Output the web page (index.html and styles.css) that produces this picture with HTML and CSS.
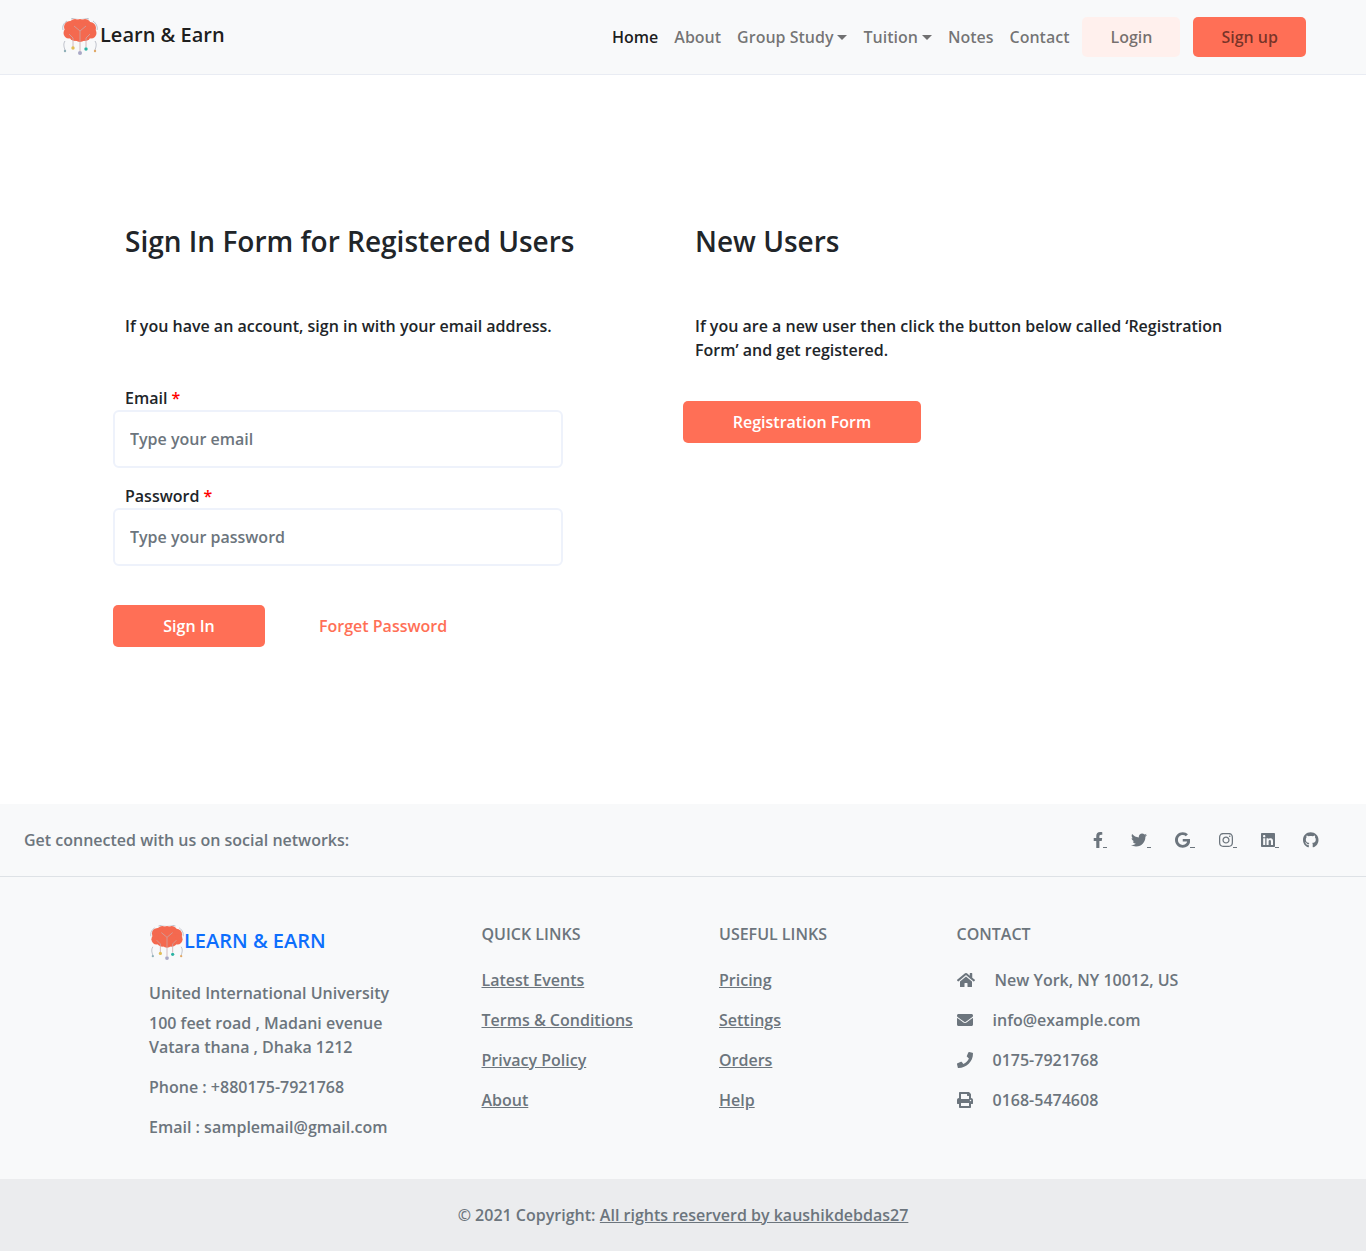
FILE: index.html
```html
<!DOCTYPE html>
<html lang="en">
<head>
<meta charset="utf-8">
<title>Learn &amp; Earn</title>
<link rel="stylesheet" href="styles.css">
</head>
<body>
<svg class="defs" width="0" height="0" aria-hidden="true">
  <symbol id="brain" viewBox="0 0 36 38">
    <g fill="none" stroke="#a4a8b4" stroke-width=".7">
      <path d="M1 12c-1-4 1-7 4-9M9 1c5-2 12-2 18 0M31 3c3 2 5 6 4 9"/>
      <path d="M3 23c-2 3-1 6 0 9M33 23c2 3 1 6 0 9"/>
    </g>
    <g fill="#f4694f">
      <circle cx="8" cy="9" r="6"/>
      <circle cx="13" cy="7" r="6"/>
      <circle cx="18" cy="7" r="6"/>
      <circle cx="23" cy="7" r="6"/>
      <circle cx="28" cy="10" r="6"/>
      <circle cx="7" cy="15" r="5.5"/>
      <circle cx="13" cy="17" r="6"/>
      <circle cx="18" cy="18" r="6"/>
      <circle cx="23" cy="17" r="6"/>
      <circle cx="29" cy="15" r="5.5"/>
      <circle cx="18" cy="13" r="9"/>
    </g>
    <g fill="none" stroke="#c9a8a8" stroke-width=".8">
      <path d="M11 29v-9l-4-4M18 33V13M24 29v-9l4-4M12 8l6 5 6-5"/>
    </g>
    <circle cx="3" cy="33" r="1.2" fill="#8fb0b8"/>
    <circle cx="11" cy="30" r="1.7" fill="#e2be55"/>
    <circle cx="18" cy="35" r="2" fill="#a9a9c6"/>
    <circle cx="24" cy="31" r="1.7" fill="#2bb3a3"/>
    <circle cx="33" cy="33" r="1.2" fill="#e0a866"/>
  </symbol>
</svg>

<header class="navbar">
  <a class="brand" href="#"><svg class="brand-logo"><use href="#brain"/></svg><span>Learn &amp; Earn</span></a>
  <nav class="nav">
    <a class="nav-link active" href="#">Home</a>
    <a class="nav-link" href="#">About</a>
    <a class="nav-link" href="#">Group Study<i class="caret"></i></a>
    <a class="nav-link" href="#">Tuition<i class="caret"></i></a>
    <a class="nav-link" href="#">Notes</a>
    <a class="nav-link" href="#">Contact</a>
    <a class="nav-btn nav-login" href="#">Login</a>
    <a class="nav-btn nav-signup" href="#">Sign up</a>
  </nav>
</header>

<main class="main">
  <section class="col">
    <h2 class="title">Sign In Form for Registered Users</h2>
    <p class="lead">If you have an account, sign in with your email address.</p>
    <form class="form">
      <label class="label">Email <span class="req">*</span></label>
      <input class="input" type="email" placeholder="Type your email">
      <label class="label label-next">Password <span class="req">*</span></label>
      <input class="input" type="password" placeholder="Type your password">
      <div class="actions">
        <a class="btn btn-signin" href="#">Sign In</a>
        <a class="forget" href="#">Forget Password</a>
      </div>
    </form>
  </section>
  <section class="col">
    <h2 class="title">New Users</h2>
    <p class="lead">If you are a new user then click the button below called ‘Registration Form’ and get registered.</p>
    <a class="btn btn-reg" href="#">Registration Form</a>
  </section>
</main>

<section class="social">
  <span>Get connected with us on social networks:</span>
  <div class="social-icons">
    <a href="#" class="s-link"><svg class="s-f" viewBox="0 0 320 512"><path d="M279.14 288l14.22-92.66h-88.91v-60.13c0-25.35 12.42-50.06 52.24-50.06h40.42V6.26S260.43 0 225.36 0c-73.22 0-121.08 44.38-121.08 124.72v70.62H22.89V288h81.39v224h100.17V288z"/></svg><u></u></a>
    <a href="#" class="s-link"><svg class="s-t" viewBox="0 0 512 512"><path d="M459.37 151.716c.325 4.548.325 9.097.325 13.645 0 138.72-105.583 298.558-298.558 298.558-59.452 0-114.68-17.219-161.137-47.106 8.447.974 16.568 1.299 25.34 1.299 49.055 0 94.213-16.568 130.274-44.832-46.132-.975-84.792-31.188-98.112-72.772 6.498.974 12.995 1.624 19.818 1.624 9.421 0 18.843-1.3 27.614-3.573-48.081-9.747-84.143-51.98-84.143-102.985v-1.299c13.969 7.797 30.214 12.67 47.431 13.319-28.264-18.843-46.781-51.005-46.781-87.391 0-19.492 5.197-37.36 14.294-52.954 51.655 63.675 129.3 105.258 216.365 109.807-1.624-7.797-2.599-15.918-2.599-24.04 0-57.828 46.782-104.934 104.934-104.934 30.213 0 57.502 12.67 76.67 33.137 23.715-4.548 46.456-13.32 66.599-25.34-7.798 24.366-24.366 44.833-46.132 57.827 21.117-2.273 41.584-8.122 60.426-16.243-14.292 20.791-32.161 39.308-52.628 54.253z"/></svg><u></u></a>
    <a href="#" class="s-link"><svg class="s-g" viewBox="0 0 488 512"><path d="M488 261.8C488 403.3 391.1 504 248 504 110.8 504 0 393.2 0 256S110.8 8 248 8c66.8 0 123 24.5 166.3 64.9l-67.5 64.9C258.5 52.6 94.3 116.6 94.3 256c0 86.5 69.1 156.6 153.7 156.6 98.2 0 135-70.4 140.8-106.9H248v-85.3h236.1c2.3 12.7 3.9 24.9 3.9 41.4z"/></svg><u></u></a>
    <a href="#" class="s-link"><svg class="s-i" viewBox="0 0 448 512"><path d="M224.1 141c-63.6 0-114.9 51.3-114.9 114.9s51.3 114.9 114.9 114.9S339 319.5 339 255.9 287.7 141 224.1 141zm0 189.6c-41.1 0-74.7-33.5-74.7-74.7s33.5-74.7 74.7-74.7 74.7 33.5 74.7 74.7-33.6 74.7-74.7 74.7zm146.4-194.3c0 14.9-12 26.8-26.8 26.8-14.9 0-26.8-12-26.8-26.8s12-26.8 26.8-26.8 26.8 12 26.8 26.8zm76.1 27.2c-1.7-35.9-9.9-67.7-36.2-93.9-26.2-26.2-58-34.4-93.9-36.2-37-2.1-147.9-2.1-184.9 0-35.8 1.7-67.6 9.9-93.9 36.1s-34.4 58-36.2 93.9c-2.1 37-2.1 147.9 0 184.9 1.7 35.9 9.9 67.7 36.2 93.9s58 34.4 93.9 36.2c37 2.1 147.9 2.1 184.9 0 35.9-1.7 67.7-9.9 93.9-36.2 26.2-26.2 34.4-58 36.2-93.9 2.1-37 2.1-147.8 0-184.8zM398.8 388c-7.8 19.6-22.9 34.7-42.6 42.6-29.5 11.7-99.5 9-132.1 9s-102.7 2.6-132.1-9c-19.6-7.8-34.7-22.9-42.6-42.6-11.7-29.5-9-99.5-9-132.1s-2.6-102.7 9-132.1c7.8-19.6 22.9-34.7 42.6-42.6 29.5-11.7 99.5-9 132.1-9s102.7-2.6 132.1 9c19.6 7.8 34.7 22.9 42.6 42.6 11.7 29.5 9 99.5 9 132.1s2.7 102.7-9 132.1z"/></svg><u></u></a>
    <a href="#" class="s-link"><svg class="s-i" viewBox="0 0 448 512"><path d="M416 32H31.9C14.3 32 0 46.5 0 64.3v383.4C0 465.5 14.3 480 31.9 480H416c17.6 0 32-14.5 32-32.3V64.3c0-17.8-14.4-32.3-32-32.3zM135.4 416H69V202.2h66.5V416zm-33.2-243c-21.3 0-38.5-17.3-38.5-38.5S80.9 96 102.2 96c21.2 0 38.5 17.3 38.5 38.5 0 21.3-17.2 38.5-38.5 38.5zm282.1 243h-66.4V312c0-24.8-.5-56.7-34.5-56.7-34.6 0-39.9 27-39.9 54.9V416h-66.4V202.2h63.7v29.2h.9c8.9-16.8 30.6-34.5 62.9-34.5 67.2 0 79.7 44.3 79.7 101.9V416z"/></svg><u></u></a>
    <a href="#" class="s-link"><svg class="s-h" viewBox="0 0 496 512"><path d="M165.9 397.4c0 2-2.3 3.6-5.2 3.6-3.3 0-5.6-1.6-5.6-3.6 0-2 2.3-3.6 5.2-3.6 3-.3 5.6 1.3 5.6 3.6zm-31.1-4.5c-.7 2 1.3 4.3 4.3 4.9 2.6 1 5.6 0 6.2-2s-1.3-4.3-4.3-5.2c-2.6-.7-5.5.3-6.2 2.3zm44.2-1.7c-2.9.7-4.9 2.6-4.6 4.9.3 2 2.9 3.3 5.9 2.6 2.9-.7 4.9-2.6 4.6-4.6-.3-1.9-3-3.2-5.9-2.9zM244.8 8C106.1 8 0 113.3 0 252c0 110.9 69.8 205.8 169.5 239.2 12.8 2.3 17.3-5.6 17.3-12.1 0-6.2-.3-40.4-.3-61.4 0 0-70 15-84.7-29.8 0 0-11.4-29.1-27.8-36.6 0 0-22.9-15.7 1.6-15.4 0 0 24.9 2 38.6 25.8 21.9 38.6 58.6 27.5 72.9 20.9 2.3-16 8.8-27.1 16-33.7-55.9-6.2-112.3-14.3-112.3-110.5 0-27.5 7.6-41.3 23.6-58.9-2.6-6.5-11.1-33.3 2.6-67.9 20.9-6.5 69 27 69 27 20-5.6 41.5-8.5 62.8-8.5s42.8 2.9 62.8 8.5c0 0 48.1-33.6 69-27 13.7 34.7 5.2 61.4 2.6 67.9 16 17.7 25.8 31.5 25.8 58.9 0 96.5-58.9 104.2-114.8 110.5 9.2 7.9 17 22.9 17 46.4 0 33.7-.3 75.4-.3 83.6 0 6.5 4.6 14.4 17.3 12.1C428.2 457.8 496 362.9 496 252 496 113.3 383.5 8 244.8 8z"/></svg></a>
  </div>
</section>

<footer class="footer">
  <div class="f-col">
    <a class="f-brand" href="#"><svg class="f-logo"><use href="#brain"/></svg><span>LEARN &amp; EARN</span></a>
    <p class="f-p f-uni">United International University</p>
    <p class="f-p">100 feet road , Madani evenue<br>Vatara thana , Dhaka 1212</p>
    <p class="f-p">Phone : +880175-7921768</p>
    <p class="f-p">Email : samplemail@gmail.com</p>
  </div>
  <div class="f-col">
    <h6 class="f-head">QUICK LINKS</h6>
    <p class="f-row"><a href="#">Latest Events</a></p>
    <p class="f-row"><a href="#">Terms &amp; Conditions</a></p>
    <p class="f-row"><a href="#">Privacy Policy</a></p>
    <p class="f-row"><a href="#">About</a></p>
  </div>
  <div class="f-col">
    <h6 class="f-head">USEFUL LINKS</h6>
    <p class="f-row"><a href="#">Pricing</a></p>
    <p class="f-row"><a href="#">Settings</a></p>
    <p class="f-row"><a href="#">Orders</a></p>
    <p class="f-row"><a href="#">Help</a></p>
  </div>
  <div class="f-col">
    <h6 class="f-head">CONTACT</h6>
    <p class="f-row c-row"><svg class="c-home" viewBox="0 0 576 512"><path d="M280.37 148.26L96 300.11V464a16 16 0 0 0 16 16l112.06-.29a16 16 0 0 0 15.92-16V368a16 16 0 0 1 16-16h64a16 16 0 0 1 16 16v95.64a16 16 0 0 0 16 16.05L464 480a16 16 0 0 0 16-16V300L295.67 148.26a12.19 12.19 0 0 0-15.3 0zM571.6 251.47L488 182.56V44.05a12 12 0 0 0-12-12h-56a12 12 0 0 0-12 12v72.61L318.47 43a48 48 0 0 0-61 0L4.34 251.47a12 12 0 0 0-1.6 16.9l25.5 31A12 12 0 0 0 45.15 301l235.22-193.74a12.19 12.19 0 0 1 15.3 0L530.9 301a12 12 0 0 0 16.9-1.6l25.5-31a12 12 0 0 0-1.7-16.93z"/></svg>New York, NY 10012, US</p>
    <p class="f-row c-row"><svg class="c-ic" viewBox="0 0 512 512"><path d="M502.3 190.8c3.9-3.1 9.7-.2 9.7 4.7V400c0 26.5-21.5 48-48 48H48c-26.5 0-48-21.5-48-48V195.6c0-5 5.7-7.8 9.7-4.7 22.4 17.4 52.1 39.5 154.1 113.6 21.1 15.4 56.7 47.8 92.2 47.6 35.7.3 72-32.8 92.3-47.6 102-74.1 131.6-96.3 154-113.7zM256 320c23.2.4 56.6-29.2 73.4-41.4 132.7-96.3 142.8-104.7 173.4-128.7 5.8-4.5 9.2-11.5 9.2-18.9v-19c0-26.5-21.5-48-48-48H48C21.5 64 0 85.5 0 112v19c0 7.4 3.4 14.3 9.2 18.9 30.6 23.9 40.7 32.4 173.4 128.7 16.8 12.2 50.2 41.8 73.4 41.4z"/></svg>info@example.com</p>
    <p class="f-row c-row"><svg class="c-ic" viewBox="0 0 512 512"><path d="M493.4 24.6l-104-24c-11.3-2.6-22.9 3.3-27.5 13.9l-48 112c-4.2 9.8-1.4 21.3 6.9 28l60.6 49.6c-36 76.7-98.9 140.5-177.2 177.2l-49.6-60.6c-6.8-8.3-18.2-11.1-28-6.9l-112 48C3.9 366.5-2 378.1.6 389.4l24 104C27.1 504.2 36.7 512 48 512c256.1 0 464-207.5 464-464 0-11.2-7.7-20.9-18.6-23.4z"/></svg>0175-7921768</p>
    <p class="f-row c-row"><svg class="c-ic" viewBox="0 0 512 512"><path d="M448 192V77.25c0-8.49-3.37-16.62-9.37-22.63L393.37 9.37c-6-6-14.14-9.37-22.63-9.37H96C78.33 0 64 14.33 64 32v160c-35.35 0-64 28.65-64 64v112c0 8.84 7.16 16 16 16h48v96c0 17.67 14.33 32 32 32h320c17.67 0 32-14.33 32-32v-96h48c8.84 0 16-7.16 16-16V256c0-35.35-28.65-64-64-64zm-64 256H128v-96h256v96zm0-224H128V64h192v48c0 8.84 7.16 16 16 16h48v96zm48 72c-13.25 0-24-10.75-24-24 0-13.26 10.75-24 24-24s24 10.74 24 24c0 13.25-10.75 24-24 24z"/></svg>0168-5474608</p>
  </div>
</footer>

<div class="copyright">© 2021 Copyright: <a href="#">All rights reserverd by kaushikdebdas27</a></div>
</body>
</html>
```
FILE: styles.css
```css
* { box-sizing: border-box; }
html, body { margin: 0; padding: 0; }
body {
  font-family: "Open Sans", "Noto Sans", sans-serif;
  font-size: 16px;
  line-height: 24px;
  font-weight: 600;
  color: #212529;
  background: #fff;
}
a { color: inherit; }
.defs { display: block; height: 0; }

.navbar {
  height: 75px;
  background: #f8f9fa;
  border-bottom: 1px solid #e9ecf3;
  display: flex;
  justify-content: space-between;
  align-items: center;
  padding: 0 60px 0 62px;
}
.brand {
  display: flex;
  align-items: center;
  text-decoration: none;
  color: rgba(0,0,0,.9);
  font-size: 20px;
  margin-top: -4px;
}
.brand-logo { width: 36px; height: 38px; margin-right: 2px; margin-top: 4px; }
.nav { display: flex; align-items: center; }
.nav-link {
  padding: 8px;
  text-decoration: none;
  color: rgba(0,0,0,.55);
  white-space: nowrap;
}
.nav-link.active { color: rgba(0,0,0,.9); }
.caret {
  display: inline-block;
  margin-left: 4px;
  vertical-align: 3px;
  border-top: 5px solid;
  border-left: 5px solid transparent;
  border-right: 5px solid transparent;
}
.nav-btn {
  height: 40px;
  padding: 8px 28px;
  border-radius: 5px;
  text-decoration: none;
  color: rgba(0,0,0,.55);
}
.nav-login { background: #fff0ed; margin-left: 5px; margin-right: 13px; }
.nav-signup { background: #ff6f56; }

.main {
  height: 729px;
  padding: 142px 113px 0;
  display: grid;
  grid-template-columns: 570px 570px;
}
.title {
  margin: 0;
  padding-left: 12px;
  font-size: 28px;
  line-height: 48px;
  font-weight: 600;
}
.lead {
  margin: 49px 0 0;
  padding: 0 12px;
}
.form { margin-top: 48px; width: 450px; }
.label { display: block; padding-left: 12px; }
.label-next { margin-top: 16px; }
.req { color: #f00; }
.input {
  display: block;
  width: 100%;
  height: 58px;
  margin-top: 0;
  padding: 0 15px;
  border: 2px solid #eef2fb;
  border-radius: 6px;
  font: inherit;
  color: #212529;
  background: #fff;
  outline: none;
}
.input::placeholder { color: #6c757d; opacity: 1; }
.actions { display: flex; align-items: center; margin-top: 39px; }
.btn {
  display: inline-block;
  height: 42px;
  line-height: 42px;
  border-radius: 5px;
  background: #ff6f56;
  color: #fff;
  text-align: center;
  text-decoration: none;
}
.btn-signin { width: 152px; }
.forget { margin-left: 54px; color: #ff6f56; text-decoration: none; }
.btn-reg { width: 238px; margin-top: 39px; }

.social {
  height: 73px;
  background: #f8f9fa;
  border-bottom: 1px solid #dee2e6;
  display: flex;
  align-items: center;
  justify-content: space-between;
  padding: 0 47.5px 0 24px;
  color: #6c757d;
}
.social-icons { display: flex; gap: 24px; }
.s-link {
  display: flex;
  align-items: center;
  fill: #6c757d;
}
.s-link svg { display: block; height: 16px; }
.s-f { width: 10px; }
.s-t { width: 16px; }
.s-g { width: 15.25px; }
.s-i { width: 14px; }
.s-h { width: 15.5px; }
.s-link u {
  display: block;
  width: 4.2px;
  height: 1px;
  background: #6c757d;
  align-self: flex-end;
}

.footer {
  height: 302px;
  background: #f8f9fa;
  padding: 45px 0 0 149px;
  display: grid;
  grid-template-columns: 332.5px 237.5px 237.5px 1fr;
  color: #6c757d;
}
.f-brand {
  display: flex;
  align-items: center;
  color: #0d6efd;
  font-size: 20px;
  text-decoration: none;
  height: 38px;
  margin-top: 0;
}
.f-logo { width: 34px; height: 36px; flex: none; margin-left: 1px; margin-top: 3px; }
.f-p { margin: 16px 0 0; }
.f-uni { margin-top: 21px; }
.f-p + .f-p { margin-top: 16px; }
.f-uni + .f-p { margin-top: 6px; }
.f-head { margin: 0; font-size: 16px; font-weight: 600; line-height: 24px; }
.f-row { margin: 16px 0 0; }
.f-head + .f-row { margin-top: 22px; }
.c-row { display: flex; align-items: center; }
.c-row svg { display: block; height: 16px; fill: #6c757d; flex: none; }
.c-home { width: 18px; margin-right: 20px; }
.c-ic { width: 16px; margin-right: 20px; }

.copyright {
  height: 72px;
  background: #ebecee;
  display: flex;
  align-items: center;
  justify-content: center;
  gap: .28em;
  color: #6c757d;
}
```
